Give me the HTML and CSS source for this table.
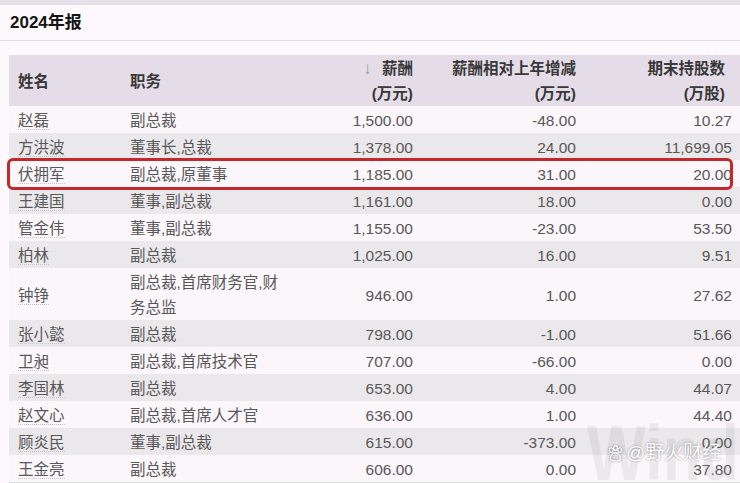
FILE: index.html
```html
<!DOCTYPE html>
<html lang="zh">
<head>
<meta charset="utf-8">
<title>2024年报</title>
<link rel="stylesheet" href="styles.css">
</head>
<body>
<div class="topbar"></div>
<div class="title-bar">2024年报</div>
<div class="table-wrap">
  <table class="pay">
    <colgroup>
      <col class="c-name"><col class="c-role"><col class="c-pay"><col class="c-diff"><col class="c-share">
    </colgroup>
    <thead>
      <tr>
        <th class="txt">姓名</th>
        <th class="txt">职务</th>
        <th class="num"><span class="arrow">↓</span> 薪酬<br>(万元)</th>
        <th class="num">薪酬相对上年增减<br>(万元)</th>
        <th class="num">期末持股数<br>(万股)</th>
      </tr>
    </thead>
    <tbody>
      <tr><td><span class="nm">赵磊</span></td><td>副总裁</td><td class="num">1,500.00</td><td class="num">-48.00</td><td class="num">10.27</td></tr>
      <tr><td><span class="nm">方洪波</span></td><td>董事长,总裁</td><td class="num">1,378.00</td><td class="num">24.00</td><td class="num">11,699.05</td></tr>
      <tr><td><span class="nm">伏拥军</span></td><td>副总裁,原董事</td><td class="num">1,185.00</td><td class="num">31.00</td><td class="num">20.00</td></tr>
      <tr><td><span class="nm">王建国</span></td><td>董事,副总裁</td><td class="num">1,161.00</td><td class="num">18.00</td><td class="num">0.00</td></tr>
      <tr><td><span class="nm">管金伟</span></td><td>董事,副总裁</td><td class="num">1,155.00</td><td class="num">-23.00</td><td class="num">53.50</td></tr>
      <tr><td><span class="nm">柏林</span></td><td>副总裁</td><td class="num">1,025.00</td><td class="num">16.00</td><td class="num">9.51</td></tr>
      <tr><td><span class="nm">钟铮</span></td><td>副总裁,首席财务官,财务总监</td><td class="num">946.00</td><td class="num">1.00</td><td class="num">27.62</td></tr>
      <tr><td><span class="nm">张小懿</span></td><td>副总裁</td><td class="num">798.00</td><td class="num">-1.00</td><td class="num">51.66</td></tr>
      <tr><td><span class="nm">卫昶</span></td><td>副总裁,首席技术官</td><td class="num">707.00</td><td class="num">-66.00</td><td class="num">0.00</td></tr>
      <tr><td><span class="nm">李国林</span></td><td>副总裁</td><td class="num">653.00</td><td class="num">4.00</td><td class="num">44.07</td></tr>
      <tr><td><span class="nm">赵文心</span></td><td>副总裁,首席人才官</td><td class="num">636.00</td><td class="num">1.00</td><td class="num">44.40</td></tr>
      <tr><td><span class="nm">顾炎民</span></td><td>董事,副总裁</td><td class="num">615.00</td><td class="num">-373.00</td><td class="num">0.00</td></tr>
      <tr><td><span class="nm">王金亮</span></td><td>副总裁</td><td class="num">606.00</td><td class="num">0.00</td><td class="num">37.80</td></tr>
    </tbody>
  </table>
  <div class="highlight"></div>
</div>
<div class="wm-wind">Wind</div>
<div class="wm-tag">
  <svg class="paw" viewBox="0 0 20 20" width="17" height="17">
    <ellipse cx="5" cy="6" rx="2.2" ry="2.8" fill="none" stroke="#fff" stroke-width="1.4"/>
    <ellipse cx="10" cy="3.6" rx="2.2" ry="2.8" fill="none" stroke="#fff" stroke-width="1.4"/>
    <ellipse cx="15" cy="6" rx="2.2" ry="2.8" fill="none" stroke="#fff" stroke-width="1.4"/>
    <path d="M4 16c0-4 3-7 6-7s6 3 6 7c0 2-2 2.5-3 2.5H7c-1 0-3-.5-3-2.5z" fill="none" stroke="#fff" stroke-width="1.4"/>
    <text x="10" y="16.5" font-size="5" fill="#fff" text-anchor="middle" font-family="Liberation Sans, sans-serif">du</text>
  </svg>
  <span>@野火财经</span>
</div>
</body>
</html>
```

FILE: styles.css
```css
html, body {
  margin: 0;
  padding: 0;
}
body {
  width: 740px;
  height: 483px;
  overflow: hidden;
  background: #fcf8fb;
  font-family: "Liberation Sans", "Noto Sans CJK SC", sans-serif;
  position: relative;
}
.topbar {
  height: 5px;
  background: #e6e1e8;
}
.title-bar {
  height: 35px;
  line-height: 36px;
  padding-left: 10px;
  font-size: 17px;
  font-weight: bold;
  color: #151515;
  border-bottom: 1px solid #e4dfe4;
}
.table-wrap {
  padding: 14px 0 0 9px;
  position: relative;
}
.pay {
  table-layout: fixed;
  border-collapse: collapse;
  width: 731px;
  font-size: 15.5px;
  color: #585858;
}
.c-name { width: 112px; }
.c-role { width: 170px; }
.c-pay { width: 130px; }
.c-diff { width: 163px; }
.c-share { width: 156px; }
.pay thead tr {
  background: #e4dde7;
}
.pay th {
  font-size: 15.5px;
  font-weight: bold;
  color: #383838;
  line-height: 25px;
  padding: 1px 9px 0;
  height: 49px;
  vertical-align: middle;
}
.pay th.txt {
  text-align: left;
}
.pay th.num {
  text-align: right;
  padding-right: 8px;
}
.pay th:last-child,
.pay td:last-child {
  padding-right: 15px;
}
.arrow {
  color: #9a9a9a;
  font-weight: normal;
  font-size: 17px;
  margin-right: 6px;
}
.pay td {
  line-height: 25px;
  padding: 2px 9px 0;
  vertical-align: middle;
}
.pay td.num {
  text-align: right;
  padding-right: 8px;
}
.pay tbody tr:nth-child(odd) {
  background: #fbf6fa;
}
.pay tbody tr:nth-child(even) {
  background: #ebe8eb;
}
.pay tbody tr:last-child {
  border-bottom: 1px solid #ddd;
}
.nm {
  border-bottom: 1px dotted #c8c4c8;
}
.highlight {
  position: absolute;
  left: 7px;
  top: 117px;
  width: 720px;
  height: 26px;
  border: 3px solid #c3282c;
  border-radius: 6px;
  pointer-events: none;
}
.wm-wind {
  position: absolute;
  left: 587px;
  top: 414px;
  font-size: 78px;
  font-weight: bold;
  font-family: "Liberation Sans", sans-serif;
  color: rgba(150, 150, 150, 0.15);
  line-height: 1;
  transform: scaleX(0.8);
  transform-origin: left top;
}
.wm-tag {
  position: absolute;
  left: 607px;
  top: 442px;
  display: flex;
  align-items: center;
  gap: 2px;
  font-size: 19px;
  line-height: 22px;
  color: #fff;
  text-shadow: 0 0 2px rgba(0,0,0,0.45);
}
.paw {
  filter: drop-shadow(0 0 1px rgba(0,0,0,0.5));
}
```
